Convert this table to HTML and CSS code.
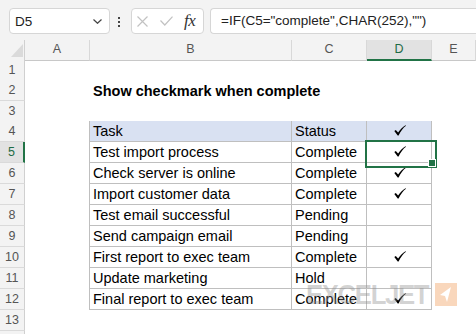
FILE: index.html
```html
<!DOCTYPE html>
<html>
<head>
<meta charset="utf-8">
<link rel="stylesheet" href="styles.css">
</head>
<body>
<div class="toolbar">
  <div class="namebox"><span>D5</span>
    <svg class="chev" width="9" height="5" viewBox="0 0 9 5"><polyline points="0.5,0.5 4.5,4.3 8.5,0.5" fill="none" stroke="#444" stroke-width="1.2"/></svg>
  </div>
  <div class="dots"><span></span><span></span><span></span></div>
  <div class="fxbox">
    <svg class="x-icon" width="11" height="11" viewBox="0 0 11 11"><path d="M0.5 0.5 L10.5 10.5 M10.5 0.5 L0.5 10.5" stroke="#c2c2c2" stroke-width="1.2" fill="none"/></svg>
    <svg class="ok-icon" width="13" height="10" viewBox="0 0 13 10"><polyline points="0.5,4.5 4.8,9 12.5,0.7" fill="none" stroke="#c2c2c2" stroke-width="1.2"/></svg>
    <span class="fx"><i>f</i><i>x</i></span>
  </div>
  <div class="formula">=IF(C5="complete",CHAR(252),"")</div>
</div>

<div class="sheet">
  <div class="row hdr">
    <div class="corner"><svg width="12" height="13" viewBox="0 0 12 13"><polygon points="12,0 12,13 0,13" fill="#dadada"/></svg></div>
    <div class="ch">A</div><div class="ch">B</div><div class="ch">C</div><div class="ch on">D</div><div class="ch">E</div>
  </div>
  <div class="row h20"><div class="rh">1</div><div></div><div></div><div></div><div></div><div></div></div>
  <div class="row h21"><div class="rh">2</div><div></div><div class="title">Show checkmark when complete</div><div></div><div></div><div></div></div>
  <div class="row h20"><div class="rh">3</div><div></div><div class="tt"></div><div class="tt"></div><div class="tt"></div><div></div></div>

  <div class="row h21"><div class="rh">4</div><div class="tl"></div><div class="t th">Task</div><div class="t th">Status</div>
    <div class="t th ck"><svg class="chk" width="12" height="11" viewBox="0 0 12 11"><path d="M0.3 6 L1.8 5 L4.1 7.6 C6 4.6 8.5 1.8 11.5 0.2 L12 0.8 C9 3 6.6 6.4 4.6 10.6 L3.7 10.6 Z"/></svg></div><div></div></div>

  <div class="row h21"><div class="rh on">5</div><div class="tl"></div><div class="t">Test import process</div><div class="t">Complete</div>
    <div class="t ck active"><svg class="chk" width="12" height="11" viewBox="0 0 12 11"><path d="M0.3 6 L1.8 5 L4.1 7.6 C6 4.6 8.5 1.8 11.5 0.2 L12 0.8 C9 3 6.6 6.4 4.6 10.6 L3.7 10.6 Z"/></svg></div><div></div></div>

  <div class="row h21"><div class="rh">6</div><div class="tl"></div><div class="t">Check server is online</div><div class="t">Complete</div>
    <div class="t ck"><svg class="chk" width="12" height="11" viewBox="0 0 12 11"><path d="M0.3 6 L1.8 5 L4.1 7.6 C6 4.6 8.5 1.8 11.5 0.2 L12 0.8 C9 3 6.6 6.4 4.6 10.6 L3.7 10.6 Z"/></svg></div><div></div></div>

  <div class="row h21"><div class="rh">7</div><div class="tl"></div><div class="t">Import customer data</div><div class="t">Complete</div>
    <div class="t ck"><svg class="chk" width="12" height="11" viewBox="0 0 12 11"><path d="M0.3 6 L1.8 5 L4.1 7.6 C6 4.6 8.5 1.8 11.5 0.2 L12 0.8 C9 3 6.6 6.4 4.6 10.6 L3.7 10.6 Z"/></svg></div><div></div></div>

  <div class="row h21"><div class="rh">8</div><div class="tl"></div><div class="t">Test email successful</div><div class="t">Pending</div><div class="t ck"></div><div></div></div>

  <div class="row h21"><div class="rh">9</div><div class="tl"></div><div class="t">Send campaign email</div><div class="t">Pending</div><div class="t ck"></div><div></div></div>

  <div class="row h21"><div class="rh">10</div><div class="tl"></div><div class="t">First report to exec team</div><div class="t">Complete</div>
    <div class="t ck"><svg class="chk" width="12" height="11" viewBox="0 0 12 11"><path d="M0.3 6 L1.8 5 L4.1 7.6 C6 4.6 8.5 1.8 11.5 0.2 L12 0.8 C9 3 6.6 6.4 4.6 10.6 L3.7 10.6 Z"/></svg></div><div></div></div>

  <div class="row h21"><div class="rh">11</div><div class="tl"></div><div class="t">Update marketing</div><div class="t">Hold</div><div class="t ck"></div><div></div></div>

  <div class="row h21"><div class="rh">12</div><div class="tl"></div><div class="t">Final report to exec team</div><div class="t">Complete</div>
    <div class="t ck"><svg class="chk" width="12" height="11" viewBox="0 0 12 11"><path d="M0.3 6 L1.8 5 L4.1 7.6 C6 4.6 8.5 1.8 11.5 0.2 L12 0.8 C9 3 6.6 6.4 4.6 10.6 L3.7 10.6 Z"/></svg></div><div></div></div>

  <div class="row h21"><div class="rh">13</div><div></div><div></div><div></div><div></div><div></div></div>
  <div class="row h4"><div class="rh"></div><div></div><div></div><div></div><div></div><div></div></div>
</div>

<div class="wm">
  <span class="wm-text">EXCELJET</span>
  <svg class="wm-logo" width="22" height="23" viewBox="0 0 22 23"><rect width="22" height="23" fill="#f7c9a6" opacity="0.75"/><polygon points="16,4 5,12 10,13 12,19" fill="#fff"/></svg>
</div>
</body>
</html>
```

FILE: styles.css
```css
* { box-sizing: border-box; }
html, body { margin: 0; padding: 0; }
body {
  width: 476px;
  height: 334px;
  overflow: hidden;
  background: #fff;
  font-family: "Liberation Sans", Arial, sans-serif;
  position: relative;
}

/* formula toolbar */
.toolbar {
  height: 40px;
  background: #f3f3f3;
  display: flex;
  align-items: flex-start;
  padding: 8px 0 0 9px;
}
.namebox {
  width: 101px;
  height: 26px;
  background: #fff;
  border: 1px solid #d6d6d6;
  border-radius: 4px;
  display: flex;
  align-items: center;
  justify-content: space-between;
  padding: 0 7px 0 5px;
  font-size: 13.5px;
  color: #222;
}
.chev { margin-top: 1px; }
.dots {
  width: 18px;
  margin-right: 3px;
  display: flex;
  flex-direction: column;
  align-items: center;
  gap: 2px;
  padding-top: 9px;
}
.dots span { width: 2px; height: 2px; background: #444; }
.fxbox {
  width: 73px;
  height: 26px;
  background: #fff;
  border: 1px solid #d6d6d6;
  border-radius: 4px;
  display: flex;
  align-items: center;
  padding-left: 5px;
}
.x-icon { margin-right: 12px; }
.ok-icon { margin-right: 11px; }
.fx {
  font-family: "Liberation Serif", serif;
  font-style: italic;
  font-size: 17px;
  color: #333;
  letter-spacing: -0.5px;
}
.formula {
  flex: 1;
  margin-left: 6px;
  height: 26px;
  background: #fff;
  border: 1px solid #d6d6d6;
  border-right: none;
  border-radius: 4px 0 0 4px;
  padding-left: 10px;
  font-size: 13.5px;
  line-height: 24px;
  color: #222;
  white-space: nowrap;
}

/* sheet grid */
.row {
  display: grid;
  grid-template-columns: 25px 65px 202px 75px 65px 1fr;
}
.h20 { height: 20px; }
.h21 { height: 21px; }
.h4 { height: 4px; overflow: hidden; }
.hdr { height: 20px; background: #f3f3f3; }
.corner {
  border-right: 1px solid #d0d0d0;
  border-bottom: 1px solid #c8c8c8;
  display: flex;
  align-items: flex-end;
  justify-content: flex-end;
  padding: 0 1px 3px 0;
}
.ch {
  border-right: 1px solid #d8d8d8;
  border-bottom: 1px solid #c8c8c8;
  text-align: center;
  font-size: 12.5px;
  line-height: 19px;
  color: #555;
}
.ch.on {
  background: #e2e2e2;
  color: #1e6b45;
  border-bottom: 2px solid #217346;
}
.rh {
  background: #f3f3f3;
  border-right: 1px solid #d0d0d0;
  border-bottom: 1px solid #dadada;
  text-align: center;
  font-size: 12.5px;
  line-height: 20px;
  color: #555;
}
.rh.on {
  background: #e2e2e2;
  color: #1e6b45;
  border-right: 2px solid #217346;
}

.title {
  font-weight: bold;
  font-size: 14.5px;
  line-height: 20px;
  padding: 1px 0 0 3px;
  white-space: nowrap;
  color: #000;
}
.tt { border-bottom: 1px solid #bfbfbf; }
.tl { border-right: 1px solid #bfbfbf; }
.t {
  border-right: 1px solid #bfbfbf;
  border-bottom: 1px solid #bfbfbf;
  padding-left: 3px;
  font-size: 14.5px;
  line-height: 20px;
  color: #000;
  white-space: nowrap;
}
.th { background: #d9e1f2; }
.ck {
  display: flex;
  justify-content: center;
  align-items: flex-start;
  padding: 4px 0 0 1px;
}
.chk { fill: #000; }
.active { position: relative; }
.active::after {
  content: "";
  position: absolute;
  left: -2px;
  top: -2px;
  width: 68px;
  height: 24px;
  border: 2px solid #217346;
}
.active::before {
  content: "";
  position: absolute;
  left: 61px;
  top: 17px;
  width: 6px;
  height: 6px;
  background: #217346;
  border: 1px solid #fff;
  z-index: 2;
}

/* watermark */
.wm {
  position: absolute;
  left: 306px;
  top: 280px;
  display: flex;
  align-items: flex-start;
  gap: 4px;
}
.wm-text {
  font-family: "Liberation Sans", Arial, sans-serif;
  font-weight: bold;
  font-size: 28px;
  line-height: 30px;
  letter-spacing: -1.5px;
  color: rgba(140, 140, 140, 0.38);
  display: inline-block;
  transform: scaleX(0.92);
  transform-origin: left top;
  margin-right: -8px;
}
.wm-logo { margin-top: 3px; }
```
